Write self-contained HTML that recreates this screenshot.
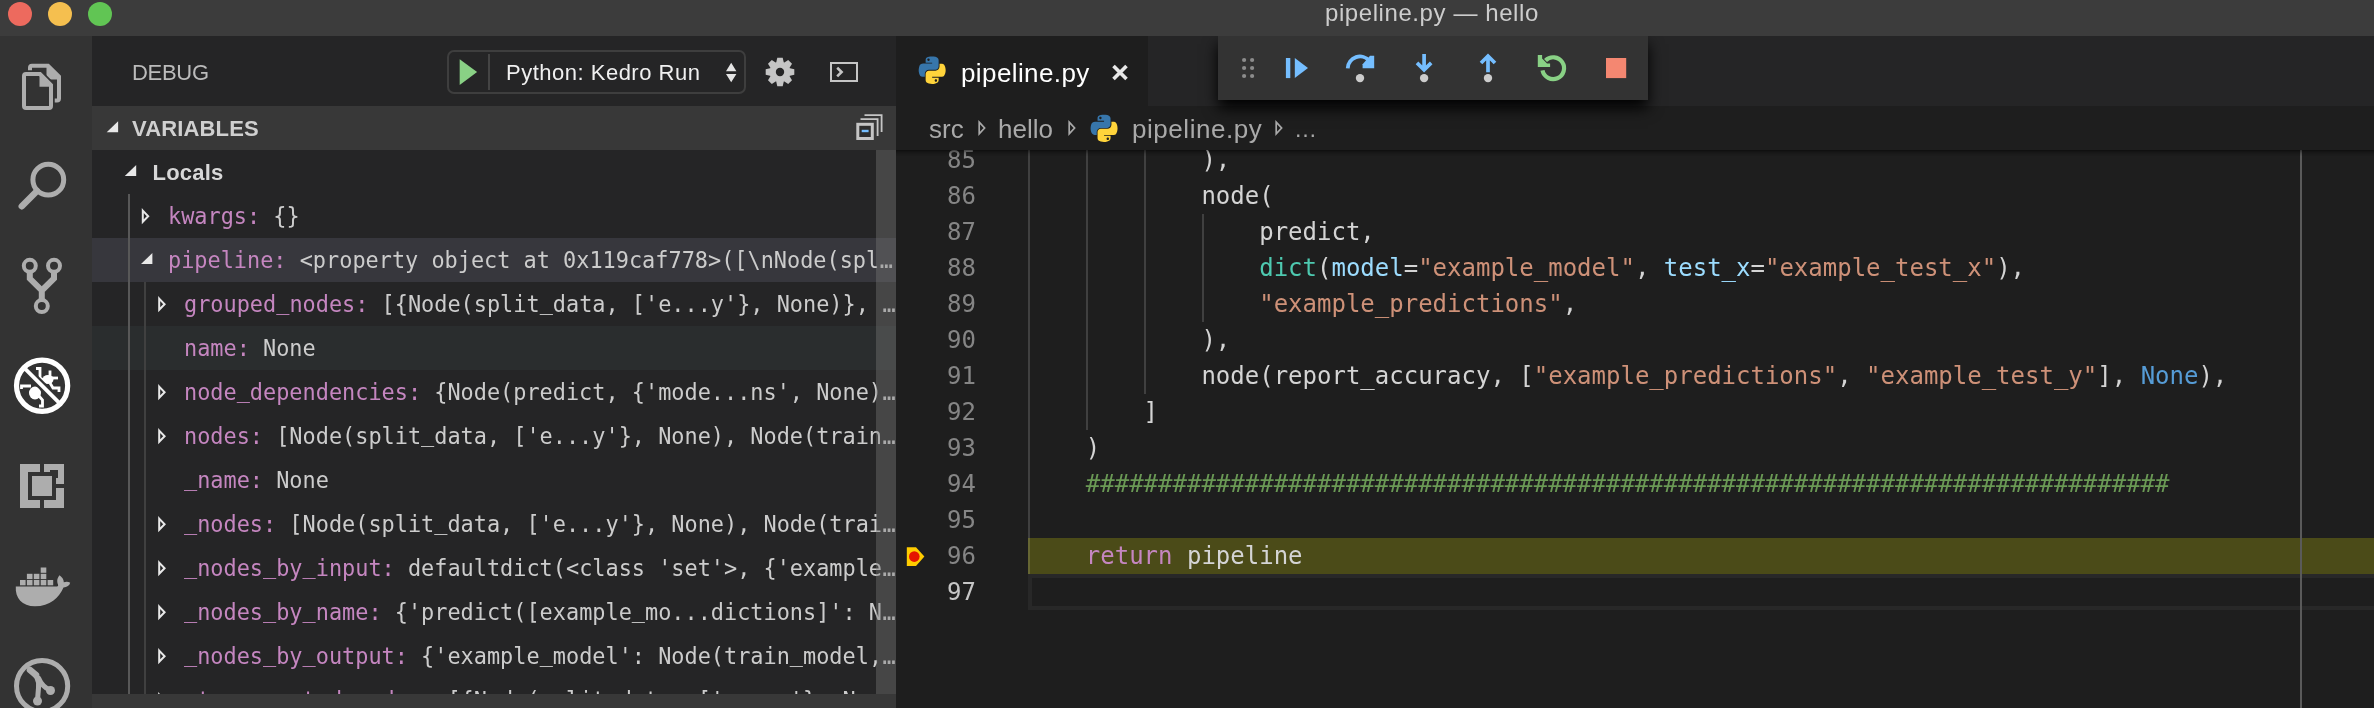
<!DOCTYPE html>
<html>
<head>
<meta charset="utf-8">
<title>pipeline.py — hello</title>
<style>
*{box-sizing:border-box;margin:0;padding:0}
html,body{width:2374px;height:708px;overflow:hidden;background:#1e1e1e}
body{position:relative;font-family:"Liberation Sans",sans-serif;color:#ccc}
.abs{position:absolute}
#titlebar{left:0;top:0;width:2374px;height:36px;background:#3c3c3c;will-change:transform}
#title{left:1325px;top:-3px;height:32px;line-height:32px;font-size:24px;letter-spacing:0.58px;color:#cccccc;white-space:nowrap}
.tl{width:24px;height:24px;border-radius:50%;top:2px}
#activity{left:0;top:36px;width:92px;height:672px;background:#333333}
#sidebar{left:92px;top:36px;width:804px;height:672px;background:#252526;overflow:hidden;will-change:transform}
#editor{left:896px;top:36px;width:1478px;height:672px;background:#1e1e1e;overflow:hidden;will-change:transform}
/* sidebar */
#dbgtitle{left:40px;top:22px;font-size:22px;line-height:30px;color:#bbbbbb;letter-spacing:-0.3px}
#startbox{left:355px;top:14px;width:299px;height:44px;border:2px solid #3e3e3e;border-radius:7px}
#cfgname{left:414px;top:21px;font-size:22px;line-height:32px;color:#f0f0f0;white-space:nowrap;letter-spacing:0.5px}
#varhdr{left:0;top:70px;width:804px;height:44px;background:#383838}
#varhdr span{position:absolute;left:40px;top:8px;font-size:22px;font-weight:bold;line-height:30px;color:#d0d0d0;letter-spacing:0.15px}
#watchhdr{left:0;top:658px;width:804px;height:14px;background:#383838}
#vscroll{left:784px;top:114px;width:20px;height:544px;background:rgba(121,121,121,0.4)}
.row{position:absolute;left:0;width:804px;height:44px;white-space:nowrap;overflow:hidden}
.row .t{position:absolute;top:1px;height:44px;line-height:44px;font-family:"DejaVu Sans Mono","Liberation Mono",monospace;font-size:21.89px;color:#cccccc;white-space:pre;transform-origin:0 29.600px;transform:scaleY(1.07)}
.row .n{color:#c586c0}
.row .u{position:relative;top:-3.5px}
.row .el{margin-left:0.5px}
.row .loc{position:absolute;left:60.500px;top:8px;letter-spacing:0.2px;font-size:22px;font-weight:bold;line-height:30px;color:#d8d8d8}
.row.sel{background:#37373d}
.row.hov{background:#2a2d2e}
.g1{left:36px;top:158px;width:2px;height:500px;background:#585858}
.g2{left:52px;top:246px;width:2px;height:412px;background:#404040}
/* editor */
#tabs{left:0;top:0;width:1478px;height:70px;background:#252526}
#tab{left:0;top:0;width:252px;height:70px;background:#1e1e1e}
#tabname{left:65px;top:19px;font-size:26px;line-height:36px;color:#ffffff;white-space:nowrap;letter-spacing:0.4px}
#crumbs{left:0;top:70px;width:1478px;height:44px;background:#1e1e1e}
.cr{position:absolute;top:7px;font-size:26px;line-height:32px;color:#a9a9a9;white-space:nowrap}
#code{left:0;top:114px;width:1478px;height:558px;background:#1e1e1e;overflow:hidden}
#shadow{left:0;top:0;width:1478px;height:6px;box-shadow:#000 0 6px 6px -6px inset}
.ln{position:absolute;left:0;width:80px;text-align:right;height:36px;line-height:36px;font-family:"DejaVu Sans Mono","Liberation Mono",monospace;font-size:24px;color:#858585}
.ln.act{color:#c6c6c6}
.cl{position:absolute;left:132px;height:36px;line-height:36px;font-family:"DejaVu Sans Mono","Liberation Mono",monospace;font-size:24px;color:#d4d4d4;white-space:pre}
.s{color:#ce9178}.p{color:#9cdcfe}.ty{color:#4ec9b0}.k{color:#569cd6}.c{color:#6a9955}.r{color:#c586c0}
.ig{position:absolute;width:2px;background:#404040}
#hl{left:132px;top:388px;width:1346px;height:36px;background:#4b4b18;border-left:2px solid #666633}
#cur{left:132px;top:424px;width:1350px;height:36px;border:4px solid #282828}
#ruler{left:1404px;top:0;width:2px;height:558px;background:#5a5a5a}
#dbgbar{left:322px;top:0;width:430px;height:64px;background:#333333;box-shadow:0 8px 14px 0 #000}
#icons{left:0;top:0}
</style>
</head>
<body>
<div id="titlebar" class="abs">
  <div class="abs tl" style="left:8px;background:#ed6a5e"></div>
  <div class="abs tl" style="left:48px;background:#f5bf4f"></div>
  <div class="abs tl" style="left:88px;background:#61c554"></div>
  <div id="title" class="abs">pipeline.py — hello</div>
</div>

<div id="activity" class="abs"></div>

<div id="sidebar" class="abs">
  <div id="dbgtitle" class="abs">DEBUG</div>
  <div id="startbox" class="abs"></div>
  <div id="cfgname" class="abs">Python: Kedro Run</div>
  <div id="varhdr" class="abs"><span>VARIABLES</span></div>
<div class="row " style="top:114px"><span class="loc">Locals</span></div>
<div class="row " style="top:158px"><span class="t" style="left:76px"><span class="n">kwargs:</span> {}</span></div>
<div class="row sel" style="top:202px"><span class="t" style="left:76px"><span class="n">pipeline:</span> &lt;property object at 0x119caf778&gt;([\nNode(spl<span class="el">…</span></span></div>
<div class="row " style="top:246px"><span class="t" style="left:92px"><span class="n">grouped<span class="u">_</span>nodes:</span> [{Node(split<span class="u">_</span>data, [&#x27;e...y&#x27;}, None)}, <span class="el">…</span></span></div>
<div class="row hov" style="top:290px"><span class="t" style="left:92px"><span class="n">name:</span> None</span></div>
<div class="row " style="top:334px"><span class="t" style="left:92px"><span class="n">node<span class="u">_</span>dependencies:</span> {Node(predict, {&#x27;mode...ns&#x27;, None)<span class="el">…</span></span></div>
<div class="row " style="top:378px"><span class="t" style="left:92px"><span class="n">nodes:</span> [Node(split<span class="u">_</span>data, [&#x27;e...y&#x27;}, None), Node(train<span class="el">…</span></span></div>
<div class="row " style="top:422px"><span class="t" style="left:92px"><span class="n"><span class="u">_</span>name:</span> None</span></div>
<div class="row " style="top:466px"><span class="t" style="left:92px"><span class="n"><span class="u">_</span>nodes:</span> [Node(split<span class="u">_</span>data, [&#x27;e...y&#x27;}, None), Node(trai<span class="el">…</span></span></div>
<div class="row " style="top:510px"><span class="t" style="left:92px"><span class="n"><span class="u">_</span>nodes<span class="u">_</span>by<span class="u">_</span>input:</span> defaultdict(&lt;class &#x27;set&#x27;&gt;, {&#x27;example<span class="el">…</span></span></div>
<div class="row " style="top:554px"><span class="t" style="left:92px"><span class="n"><span class="u">_</span>nodes<span class="u">_</span>by<span class="u">_</span>name:</span> {&#x27;predict([example<span class="u">_</span>mo...dictions]&#x27;: N<span class="el">…</span></span></div>
<div class="row " style="top:598px"><span class="t" style="left:92px"><span class="n"><span class="u">_</span>nodes<span class="u">_</span>by<span class="u">_</span>output:</span> {&#x27;example<span class="u">_</span>model&#x27;: Node(train<span class="u">_</span>model,<span class="el">…</span></span></div>
<div class="row " style="top:642px"><span class="t" style="left:92px"><span class="n"><span class="u">_</span>topo<span class="u">_</span>sorted<span class="u">_</span>nodes:</span> [{Node(split<span class="u">_</span>data, [&#x27;e...y&#x27;}, Non<span class="el">…</span></span></div>
  <div class="abs g1"></div>
  <div class="abs g2"></div>
  <div id="vscroll" class="abs"></div>
  <div id="watchhdr" class="abs"></div>
</div>

<div id="editor" class="abs">
  <div id="tabs" class="abs">
    <div id="tab" class="abs"></div>
    <div id="tabname" class="abs">pipeline.py</div>
  </div>
  <div id="crumbs" class="abs">
    <span class="cr" style="left:33px">src</span>
    <span class="cr" style="left:102px">hello</span>
    <span class="cr" style="left:236px;letter-spacing:0.55px">pipeline.py</span>
    <span class="cr" style="left:398px;font-size:23px">…</span>
  </div>
  <div id="code" class="abs">
    <div id="hl" class="abs"></div>
    <div id="cur" class="abs"></div>
    <div class="ig" style="left:132px;top:0;height:388px"></div>
    <div class="ig" style="left:190px;top:0;height:280px"></div>
    <div class="ig" style="left:248px;top:0;height:244px"></div>
    <div class="ig" style="left:306px;top:64px;height:108px"></div>
<div class="ln" style="top:-8px">85</div><div class="cl" style="top:-8px">            ),</div>
<div class="ln" style="top:28px">86</div><div class="cl" style="top:28px">            node(</div>
<div class="ln" style="top:64px">87</div><div class="cl" style="top:64px">                predict,</div>
<div class="ln" style="top:100px">88</div><div class="cl" style="top:100px">                <span class="ty">dict</span>(<span class="p">model</span>=<span class="s">"example_model"</span>, <span class="p">test_x</span>=<span class="s">"example_test_x"</span>),</div>
<div class="ln" style="top:136px">89</div><div class="cl" style="top:136px">                <span class="s">"example_predictions"</span>,</div>
<div class="ln" style="top:172px">90</div><div class="cl" style="top:172px">            ),</div>
<div class="ln" style="top:208px">91</div><div class="cl" style="top:208px">            node(report_accuracy, [<span class="s">"example_predictions"</span>, <span class="s">"example_test_y"</span>], <span class="k">None</span>),</div>
<div class="ln" style="top:244px">92</div><div class="cl" style="top:244px">        ]</div>
<div class="ln" style="top:280px">93</div><div class="cl" style="top:280px">    )</div>
<div class="ln" style="top:316px">94</div><div class="cl" style="top:316px">    <span class="c">###########################################################################</span></div>
<div class="ln" style="top:352px">95</div><div class="cl" style="top:352px"></div>
<div class="ln" style="top:388px">96</div><div class="cl" style="top:388px">    <span class="r">return</span> pipeline</div>
<div class="ln act" style="top:424px">97</div><div class="cl" style="top:424px"></div>
    <div id="ruler" class="abs"></div>
    <div id="shadow" class="abs"></div>
  </div>
  <div id="dbgbar" class="abs"></div>
</div>

<svg id="icons" class="abs" width="2374" height="708" viewBox="0 0 2374 708">
<defs>
<g id="py">
<path fill="#3776ab" d="M54.9 0C50.3 0 46 .4 42.1 1.1 30.8 3.1 28.8 7.300 28.800 15v10.200h26.600v3.400H18.800c-7.700 0-14.500 4.600-16.600 13.500-2.400 10.100-2.500 16.400 0 27 1.900 7.900 6.400 13.500 14.100 13.500h9.100V70.400c0-8.800 7.600-16.500 16.600-16.500h26.600c7.400 0 13.300-6.100 13.300-13.500V15c0-7.200-6.100-12.600-13.300-13.900C64.100.4 59.400 0 54.900 0zM40.500 8.200c2.700 0 5 2.300 5 5.100 0 2.800-2.200 5-5 5-2.800 0-5-2.300-5-5 0-2.800 2.200-5.100 5-5.100z"/>
<path fill="#ffd43b" d="M85.600 28.700v11.900c0 9.200-7.800 16.900-16.600 16.900H42.100c-7.300 0-13.300 6.200-13.300 13.500v25.400c0 7.200 6.300 11.500 13.300 13.500 8.400 2.500 16.500 2.900 26.600 0 6.700-1.900 13.300-5.900 13.300-13.500V86.200H55.400v-3.400h39.900c7.700 0 10.600-5.400 13.300-13.500 2.800-8.300 2.700-16.300 0-27-1.900-7.700-5.600-13.500-13.300-13.500h-9.700zM70.700 93c2.800 0 5 2.300 5 5 0 2.800-2.200 5.100-5 5.100-2.700 0-5-2.300-5-5.100 0-2.800 2.200-5 5-5z"/>
</g>
<path id="twc" d="M1 2.400 L6.400 8 L1 13.600 Z" fill="none" stroke="#e8e8e8" stroke-width="2" stroke-linejoin="miter"/>
<path id="two" d="M11.400 0 V11.100 H0 Z" fill="#e8e8e8"/>
<path id="bca" d="M1.200 2.200 L6.600 8 L1.200 13.800 Z" fill="none" stroke="#a9a9a9" stroke-width="1.700"/>
<clipPath id="rowclip"><rect x="92" y="150" width="804" height="544"/></clipPath>
</defs>

<!-- ACTIVITY BAR -->
<g fill="none" stroke="#adadad">
  <!-- files -->
  <path d="M32 65.700 H48 L59 76.700 V98.400 Q59 100.400 57 100.400 H32 Q30 100.400 30 98.400 V67.700 Q30 65.700 32 65.700 Z" stroke-width="4"/>
  <path d="M46.500 63.700 L61 78.200 V79.500 H46.500 Z" fill="#adadad" stroke="none"/>
  <path d="M26 74 H40 L51 85 V106 Q51 108 49 108 H26 Q24 108 24 106 V76 Q24 74 26 74 Z" stroke="#333333" stroke-width="7.500" fill="#333333"/>
  <path d="M26 74 H40 L51 85 V106 Q51 108 49 108 H26 Q24 108 24 106 V76 Q24 74 26 74 Z" stroke-width="4"/>
  <path d="M39.500 72 L53 85.500 V86.800 H39.500 Z" fill="#adadad" stroke="none"/>
  <!-- search -->
  <circle cx="48.300" cy="179.700" r="15.400" stroke-width="5"/>
  <path d="M37 191 L21.800 206.200" stroke-width="6.500" stroke-linecap="round"/>
  <!-- git -->
  <circle cx="29.800" cy="265.800" r="6" stroke-width="4"/>
  <circle cx="54" cy="265.800" r="6" stroke-width="4"/>
  <circle cx="41.800" cy="306.100" r="6" stroke-width="4"/>
  <path d="M29.800 272 V278.500 L41.800 290.500 V300 M54 272 V278.500 L41.800 290.500" stroke-width="6"/>
</g>
<!-- debug (active) -->
<g fill="none" stroke="#ffffff">
  <g stroke-width="2.800">
    <ellipse cx="35" cy="393" rx="6" ry="6.500" fill="#fff" stroke="none"/>
    <ellipse cx="48" cy="379.500" rx="5.500" ry="4.500" fill="#fff" stroke="none"/>
    <path d="M36 368.500 H40 V378 L45 381"/>
    <path d="M50 370.500 V377"/>
    <path d="M52 378 H58"/>
    <path d="M50 383 L53 388 H59 V392"/>
    <path d="M21.500 389 V386 H31"/>
    <path d="M39 396 L42.500 400 V406 H39"/>
  </g>
  <path d="M23 366.700 L61.200 404.900" stroke="#333333" stroke-width="8.500"/>
  <path d="M23 366.700 L61.200 404.900" stroke-width="3.800"/>
  <circle cx="42.100" cy="385.800" r="25.600" stroke-width="5.200"/>
</g>
<!-- extensions -->
<g fill="#adadad">
  <path d="M20 464 H40 V472 H28 V500 H40 V508 H20 Z"/>
  <path d="M44 464 H64 V484 H56 V478 H58 V470 H50 V472 H44 Z"/>
  <path d="M44 500 H56 V488 H64 V508 H44 Z"/>
  <rect x="32" y="476" width="20" height="20"/>
</g>
<!-- docker -->
<g fill="#adadad">
  <rect x="20" y="580" width="5.600" height="5.300"/><rect x="26.900" y="580" width="5.600" height="5.300"/><rect x="33.800" y="580" width="5.600" height="5.300"/><rect x="40.700" y="580" width="5.600" height="5.300"/><rect x="47.600" y="580" width="5.600" height="5.300"/>
  <rect x="26.900" y="573.800" width="5.600" height="5.300"/><rect x="33.800" y="573.800" width="5.600" height="5.300"/><rect x="40.700" y="573.800" width="5.600" height="5.300"/>
  <rect x="40.700" y="567.500" width="5.600" height="5.300"/>
  <path d="M15.800 586.500 H56.500 C57.500 586.500 58.500 586 58 584.500 C56.500 581 57.500 577.500 59.500 575.300 C62 577 63.800 579.500 63.800 582.300 C66 581.300 68.500 581.500 70.200 582.800 C69.500 585.500 67 587.500 63.500 587.500 C59 598 50 606.300 35 606.300 C22 606.300 15 598 15.800 586.500 Z"/>
</g>
<!-- git graph circle -->
<g fill="none" stroke="#adadad">
  <circle cx="42.100" cy="686" r="25.600" stroke-width="5"/>
  <path d="M29.500 669.500 C36 675 39.500 679 38.500 688 L37.500 700" stroke-width="5" stroke-linecap="round"/>
  <path d="M30 670 L36 675" stroke-width="6.500" stroke-linecap="round"/>
  <path d="M38.500 678 C41 684 45 688 50 690" stroke-width="5" stroke-linecap="round"/>
  <circle cx="50.500" cy="690.500" r="4.500" fill="#adadad" stroke="none"/>
  <circle cx="37.500" cy="701" r="4.500" fill="#adadad" stroke="none"/>
</g>

<!-- SIDEBAR HEADER -->
<path d="M459.700 59.200 L477.100 72.100 L459.700 85.100 Z" fill="#89d185"/>
<rect x="488" y="54" width="2" height="36" fill="#444444"/>
<path d="M726 71.300 H736.400 L731.200 62.800 Z M726 74 H736.400 L731.200 82.300 Z" fill="#e4e4e4"/>
<!-- gear -->
<g transform="translate(780 72)" fill="#c5c5c5">
    <path d="M-3.900 -9 L-2.700 -14.300 H2.700 L3.900 -9 Z"/>
    <path d="M-3.900 -9 L-2.700 -14.300 H2.700 L3.900 -9 Z" transform="rotate(45)"/>
    <path d="M-3.900 -9 L-2.700 -14.300 H2.700 L3.900 -9 Z" transform="rotate(90)"/>
    <path d="M-3.900 -9 L-2.700 -14.300 H2.700 L3.900 -9 Z" transform="rotate(135)"/>
    <path d="M-3.900 -9 L-2.700 -14.300 H2.700 L3.900 -9 Z" transform="rotate(180)"/>
    <path d="M-3.900 -9 L-2.700 -14.300 H2.700 L3.900 -9 Z" transform="rotate(225)"/>
    <path d="M-3.900 -9 L-2.700 -14.300 H2.700 L3.900 -9 Z" transform="rotate(270)"/>
    <path d="M-3.900 -9 L-2.700 -14.300 H2.700 L3.900 -9 Z" transform="rotate(315)"/>
  <circle r="10.200"/>
  <circle r="4.200" fill="#252526"/>
</g>
<!-- terminal -->
<rect x="831" y="63" width="26" height="18" fill="none" stroke="#c5c5c5" stroke-width="2"/>
<path d="M837.200 67.800 L841.600 72 L837.200 76.400" fill="none" stroke="#c5c5c5" stroke-width="2.600"/>
<!-- collapse all -->
<g fill="none" stroke="#c5c5c5" stroke-width="1.800">
  <path d="M864.500 115.200 H881.600 V132"/>
  <path d="M860.500 119.200 H877.600 V136"/>
</g>
<rect x="857.800" y="124.300" width="14.500" height="14.200" fill="#2d2d2d" stroke="#c5c5c5" stroke-width="3"/>
<rect x="861.700" y="129.800" width="6.900" height="2.400" fill="#75beff"/>

<!-- twisties -->
<use href="#two" x="106.700" y="121.200"/>
<g clip-path="url(#rowclip)">
<use href="#two" x="124.8" y="165.0"/>
<use href="#twc" x="141.8" y="208.2"/>
<use href="#two" x="141.0" y="253.0"/>
<use href="#twc" x="158.2" y="296.2"/>
<use href="#twc" x="158.2" y="384.2"/>
<use href="#twc" x="158.2" y="428.2"/>
<use href="#twc" x="158.2" y="516.2"/>
<use href="#twc" x="158.2" y="560.2"/>
<use href="#twc" x="158.2" y="604.2"/>
<use href="#twc" x="158.2" y="648.2"/>
<use href="#twc" x="158.2" y="692.2"/>
</g>

<!-- TAB -->
<use href="#py" transform="translate(918.600 56.600) scale(0.2446)"/>
<path d="M1113.500 66 L1126.500 79 M1126.500 66 L1113.500 79" stroke="#e8e8e8" stroke-width="3.600" fill="none"/>
<!-- breadcrumbs -->
<use href="#bca" x="978" y="120"/>
<use href="#bca" x="1068" y="120"/>
<use href="#bca" x="1275" y="120"/>
<use href="#py" transform="translate(1090.500 114.700) scale(0.2446)"/>

<!-- DEBUG TOOLBAR -->
<g fill="#8c8c8c">
  <circle cx="1244.100" cy="60" r="2.100"/><circle cx="1252.100" cy="60" r="2.100"/>
  <circle cx="1244.100" cy="68" r="2.100"/><circle cx="1252.100" cy="68" r="2.100"/>
  <circle cx="1244.100" cy="76" r="2.100"/><circle cx="1252.100" cy="76" r="2.100"/>
</g>
<g fill="#75beff">
  <rect x="1285.900" y="58" width="4.400" height="20.100"/>
  <path d="M1294.800 58 L1308 68 L1294.800 78.100 Z"/>
  <rect x="1606" y="58" width="20.200" height="20.100" fill="#f48771"/>
  <!-- step over head -->
  <path d="M1370 55.800 H1374.200 V68.300 H1362.600 V64.300 Z"/>
</g>
<g fill="none" stroke="#75beff" stroke-width="4">
  <!-- step over -->
  <path d="M1347.700 68.300 A 12.300 12.300 0 0 1 1369.500 61" stroke-width="3.800"/>
  <!-- step into -->
  <path d="M1424.100 53.900 V69 M1417 62.900 L1424.100 69.800 L1431.200 62.900" stroke-width="3.700"/>
  <!-- step out -->
  <path d="M1488 72.200 V57 M1481 63 L1488 56 L1495 63" stroke-width="3.700"/>
</g>
<g fill="#cccccc">
  <circle cx="1360" cy="78.100" r="4.200"/><circle cx="1424.100" cy="78.100" r="4.200"/><circle cx="1488" cy="78.100" r="4.200"/>
</g>
<!-- restart -->
<path d="M1545.500 60.400 A 10.900 10.900 0 1 1 1542.500 70.400" fill="none" stroke="#89d185" stroke-width="4.200"/>
<path d="M1537.800 55.100 H1542.100 V58.500 L1547 63.400 H1550.100 V66.900 H1537.800 Z" fill="#89d185"/>

<!-- breakpoint -->
<path d="M906.800 547.300 H916 L924.400 556.600 L916 565.900 H906.800 Z" fill="#ffcc00"/>
<circle cx="914.300" cy="556.600" r="5.300" fill="#e51400"/>

</svg>
</body>
</html>
